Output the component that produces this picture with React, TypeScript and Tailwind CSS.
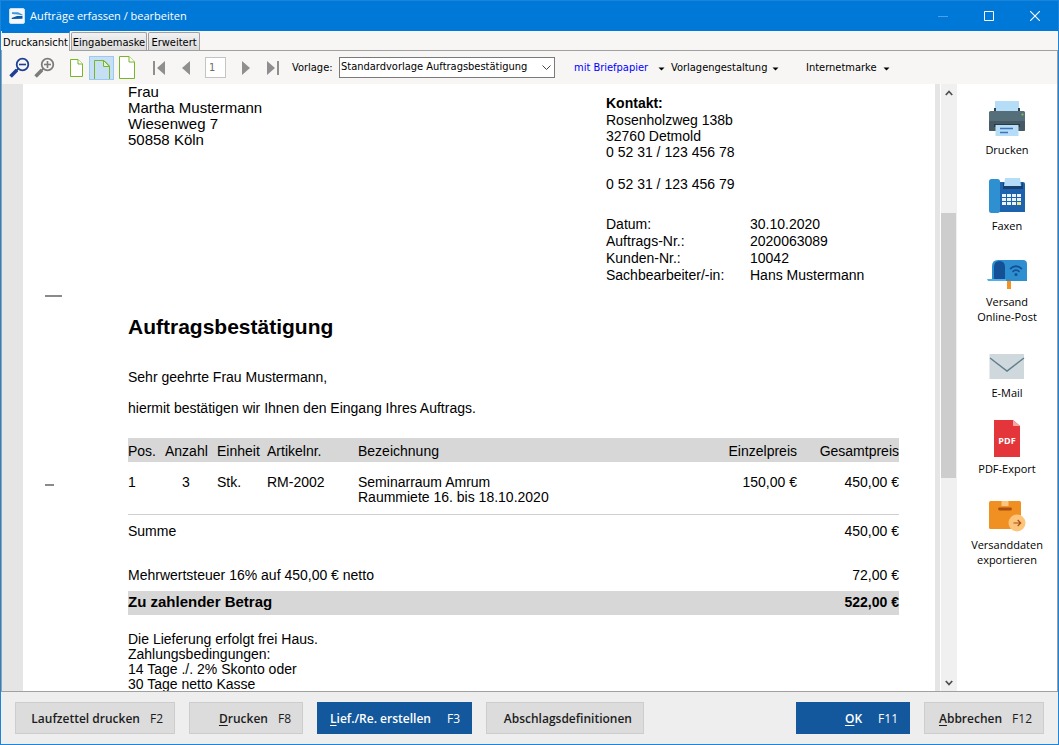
import { useState } from "react";
import type { ReactNode } from "react";
import clsx from "clsx";

type ActionButtonProps = {
    label: string;
    accessKeyLetter?: string;
    shortcut?: string;
    primary?: boolean;
    className?: string;
};

type SideActionProps = {
    lines: string[];
    children: ReactNode;
};

const TABS = [
    { id: "preview", label: "Druckansicht", width: "w-[68px]" },
    { id: "form", label: "Eingabemaske", width: "w-[76px]" },
    { id: "extended", label: "Erweitert", width: "w-[52px]" },
];

const META = [
    ["Datum:", "30.10.2020"],
    ["Auftrags-Nr.:", "2020063089"],
    ["Kunden-Nr.:", "10042"],
    ["Sachbearbeiter/-in:", "Hans Mustermann"],
];

function TitleBar() {
    return (
        <header className="flex h-[30px] shrink-0 items-center bg-[#0078d7] pl-2 text-white">
            <svg viewBox="0 0 16 16" className="h-4 w-4">
                <rect x="0.5" y="0.5" width="15" height="15" rx="1.5" fill="#f4f8fc" stroke="#c8dff4" />
                <path d="M3 4.2 L9 4.2 L13.5 6.4 L13.5 7.6 L9 6.4 L3 6 Z" fill="#3d97dc" />
                <path d="M2.5 10 L8 8 L13.5 8 L13.5 10.8 L3 11 Z" fill="#0a5aa8" />
            </svg>
            <h1 className="ml-[5px] text-[11px]">Aufträge erfassen / bearbeiten</h1>
            <div className="ml-auto flex h-full">
                <button type="button" aria-label="Minimieren" className="flex w-[46px] items-center justify-center">
                    <svg viewBox="0 0 10 10" className="h-[10px] w-[10px]"><path d="M0 5.5H10" stroke="#4da0e3" /></svg>
                </button>
                <button type="button" aria-label="Maximieren" className="flex w-[46px] items-center justify-center">
                    <svg viewBox="0 0 10 10" className="h-[10px] w-[10px]"><path d="M.5 .5H9.5V9.5H.5Z" fill="none" stroke="#fff" /></svg>
                </button>
                <button type="button" aria-label="Schließen" className="flex w-[46px] items-center justify-center">
                    <svg viewBox="0 0 10 10" className="h-[10px] w-[10px]"><path d="M0 0L10 10M10 0L0 10" stroke="#fff" strokeWidth="1.1" /></svg>
                </button>
            </div>
        </header>
    );
}

function Magnifier({ color, plus }: { color: string; plus?: boolean }) {
    return (
        <svg viewBox="0 0 22 22" className="h-[22px] w-[22px]" fill="none" stroke={color}>
            <circle cx="13.5" cy="7.5" r="5.8" strokeWidth="1.8" />
            <path d="M10 7.500H17" strokeWidth="1.6" />
            {plus && <path d="M13.500 4V11" strokeWidth="1.6" />}
            <path d="M9.300 11.700L7.500 13.500" strokeWidth="1.8" />
            <path d="M7.900 13.100L1.600 19.400" strokeWidth="3.600" />
        </svg>
    );
}

function MenuCaret() {
    return <svg viewBox="0 0 7 4" className="h-1 w-[7px]"><path d="M0.5 0.5H6.5L3.5 3.5Z" fill="#000" /></svg>;
}

function Toolbar() {
    const [page, setPage] = useState("1");
    const iconButton = "flex h-6 items-center justify-center";
    const menuButton = "flex shrink-0 items-center justify-between whitespace-nowrap pt-[2px]";

    return (
        <div className="flex h-[33px] shrink-0 items-center overflow-hidden bg-[#f7f6f4] pl-[6px] font-['DejaVu_Sans_Condensed','Noto_Sans',sans-serif] text-[11px] text-black">
            <button type="button" aria-label="Verkleinern" className={clsx(iconButton, "w-6")}><Magnifier color="#1f3f94" /></button>
            <button type="button" aria-label="Vergrößern" className={clsx(iconButton, "w-[26px]")}><Magnifier color="#7c7c7c" plus /></button>

            <button type="button" aria-label="Seite verkleinert" className={clsx(iconButton, "ml-[6px] w-[25px]")}>
                <svg viewBox="0 0 13 18" className="h-[18px] w-[13px]" fill="#fff" stroke="#76b72a">
                    <path d="M.5 .5H8L12.5 5V17.5H.5Z" /><path d="M8 .5V5H12.5" />
                </svg>
            </button>
            <button type="button" aria-label="Seitenbreite" className={clsx(iconButton, "w-[25px] items-end border border-[#99cbf0] bg-[#c6dff5]")}>
                <svg viewBox="0 0 16 19" className="h-[19px] w-4" fill="none" stroke="#76b72a">
                    <path d="M.5 19V.5H10L15.5 6V19" /><path d="M9.5 .5V6.5H15.5Z" fill="#e2f2d4" />
                </svg>
            </button>
            <button type="button" aria-label="Ganze Seite" className={clsx(iconButton, "w-[25px]")}>
                <svg viewBox="0 0 16 23" className="h-[23px] w-4" fill="#fff" stroke="#76b72a">
                    <path d="M.5 .5H10L15.5 6V22.5H.5Z" /><path d="M10 .5V6H15.5" />
                </svg>
            </button>

            <button type="button" aria-label="Erste Seite" className={clsx(iconButton, "ml-[6px] w-[27px]")}>
                <svg viewBox="0 0 12 16" className="h-4 w-3" fill="#8f8f8f"><path d="M0 1H2V15H0ZM12 1V15L4 8Z" /></svg>
            </button>
            <button type="button" aria-label="Vorherige Seite" className={clsx(iconButton, "w-[27px]")}>
                <svg viewBox="0 0 8 16" className="h-4 w-2" fill="#8f8f8f"><path d="M8 1V15L0 8Z" /></svg>
            </button>
            <input
                aria-label="Seite"
                value={page}
                onChange={e => setPage(e.target.value)}
                className="mx-[6px] h-[21px] w-[21px] border border-[#c4c4c4] bg-white pl-[3px] text-[11px] text-[#6d6d6d] outline-none"
            />
            <button type="button" aria-label="Nächste Seite" className={clsx(iconButton, "w-[27px]")}>
                <svg viewBox="0 0 8 16" className="h-4 w-2" fill="#8f8f8f"><path d="M0 1V15L8 8Z" /></svg>
            </button>
            <button type="button" aria-label="Letzte Seite" className={clsx(iconButton, "w-[27px]")}>
                <svg viewBox="0 0 12 16" className="h-4 w-3" fill="#8f8f8f"><path d="M10 1H12V15H10ZM0 1V15L8 8Z" /></svg>
            </button>

            <label htmlFor="template" className="ml-[6px] w-[47px] shrink-0 pt-[2px]">Vorlage:</label>
            <div className="relative w-[216px] shrink-0">
                <select id="template" className="block h-[21px] w-full appearance-none border border-[#7a7a7a] bg-white pl-px pr-5 text-[11px] outline-none">
                    <option>Standardvorlage Auftragsbestätigung</option>
                </select>
                <svg viewBox="0 0 9 6" className="pointer-events-none absolute right-1 top-2 h-[6px] w-[9px]">
                    <path d="M.5 .5L4.5 4.5L8.5 .5" fill="none" stroke="#444" />
                </svg>
            </div>

            <button type="button" className={clsx(menuButton, "ml-[19px] w-[91px] text-[#0000ff]")}>
                mit Briefpapier <MenuCaret />
            </button>
            <button type="button" className={clsx(menuButton, "ml-[6px] w-[108px]")}>
                Vorlagengestaltung <MenuCaret />
            </button>
            <button type="button" className={clsx(menuButton, "ml-[27px] w-[84px]")}>
                Internetmarke <MenuCaret />
            </button>
        </div>
    );
}

function Invoice() {
    return (
        <article className="flex min-w-0 flex-1 bg-white pr-9 font-['Liberation_Sans',Arial,sans-serif] text-[14px] leading-4 text-black">
            <div className="w-[105px] shrink-0 pl-[22px]" aria-hidden="true">
                <div className="mt-[211px] h-[2px] w-[17px] bg-[#8a8a8a]" />
                <div className="mt-[187px] h-[2px] w-[9px] bg-[#8a8a8a]" />
            </div>
            <div className="min-w-0 flex-1">
                <div className="flex justify-between">
                    <address className="text-[15px] not-italic">
                        Frau<br />
                        Martha Mustermann<br />
                        Wiesenweg 7<br />
                        50858 Köln
                    </address>
                    <div className="w-[293px] pt-[11px]">
                        <p className="font-bold">Kontakt:</p>
                        <p className="mt-px">Rosenholzweg 138b</p>
                        <p>32760 Detmold</p>
                        <p>0 52 31 / 123 456 78</p>
                        <p className="mt-4">0 52 31 / 123 456 79</p>
                        <dl className="mt-6 grid grid-cols-[144px_1fr] leading-[17px]">
                            {META.map(([term, value]) => (
                                <div key={term} className="contents">
                                    <dt>{term}</dt>
                                    <dd>{value}</dd>
                                </div>
                            ))}
                        </dl>
                    </div>
                </div>

                <h2 className="mt-[29px] text-[21px] font-bold leading-7">Auftragsbestätigung</h2>
                <p className="mt-7">Sehr geehrte Frau Mustermann,</p>
                <p className="mt-[15px]">hiermit bestätigen wir Ihnen den Eingang Ihres Auftrags.</p>

                <table className="mt-[22px] w-full table-fixed border-collapse text-left">
                    <colgroup>
                        <col className="w-[37px]" />
                        <col className="w-[52px]" />
                        <col className="w-[50px]" />
                        <col className="w-[91px]" />
                        <col />
                        <col className="w-[90px]" />
                        <col className="w-[102px]" />
                    </colgroup>
                    <thead>
                        <tr className="h-6 bg-[#d7d7d7] *:p-0 *:pt-[2px] *:font-normal">
                            <th>Pos.</th>
                            <th>Anzahl</th>
                            <th>Einheit</th>
                            <th>Artikelnr.</th>
                            <th>Bezeichnung</th>
                            <th className="text-right">Einzelpreis</th>
                            <th className="text-right">Gesamtpreis</th>
                        </tr>
                    </thead>
                    <tbody>
                        <tr className="border-b border-[#d0d0d0] align-top leading-[15px] *:pb-[9px] *:pt-[13px]">
                            <td>1</td>
                            <td><span className="block w-[42px] text-center">3</span></td>
                            <td>Stk.</td>
                            <td>RM-2002</td>
                            <td>Seminarraum Amrum<br />Raummiete 16. bis 18.10.2020</td>
                            <td className="text-right">150,00 €</td>
                            <td className="text-right">450,00 €</td>
                        </tr>
                    </tbody>
                    <tfoot>
                        <tr className="h-8">
                            <td colSpan={6}>Summe</td>
                            <td className="text-right">450,00 €</td>
                        </tr>
                        <tr className="*:pb-2 *:pt-5">
                            <td colSpan={6}>Mehrwertsteuer 16% auf 450,00 € netto</td>
                            <td className="text-right">72,00 €</td>
                        </tr>
                        <tr className="h-6 bg-[#d7d7d7] font-bold *:pb-[2px]">
                            <td colSpan={6} className="text-[15px]">Zu zahlender Betrag</td>
                            <td className="text-right">522,00 €</td>
                        </tr>
                    </tfoot>
                </table>

                <p className="mt-[17px] leading-[15px]">
                    Die Lieferung erfolgt frei Haus.<br />
                    Zahlungsbedingungen:<br />
                    14 Tage ./. 2% Skonto oder<br />
                    30 Tage netto Kasse
                </p>
            </div>
        </article>
    );
}

function ScrollRail() {
    return (
        <div className="flex w-4 shrink-0 flex-col bg-[#f0f0f0]">
            <button type="button" aria-label="Nach oben" className="flex h-[17px] items-center justify-center">
                <svg viewBox="0 0 8 6" className="h-[6px] w-2"><path d="M.8 5L4 1.5L7.2 5" fill="none" stroke="#505050" strokeWidth="1.8" /></svg>
            </button>
            <div className="flex-[112]" />
            <div className="mr-px flex-[265] bg-[#cdcdcd]" />
            <div className="flex-[196]" />
            <button type="button" aria-label="Nach unten" className="flex h-[17px] items-center justify-center">
                <svg viewBox="0 0 8 6" className="h-[6px] w-2"><path d="M.8 1L4 4.5L7.2 1" fill="none" stroke="#505050" strokeWidth="1.8" /></svg>
            </button>
        </div>
    );
}

function SideAction({ lines, children }: SideActionProps) {
    return (
        <button type="button" className="flex flex-col items-center text-[11px] leading-[15px] text-black">
            <svg viewBox="0 0 40 40" className="mb-px h-10 w-10">{children}</svg>
            {lines.map(line => <span key={line} className="whitespace-nowrap">{line}</span>)}
        </button>
    );
}

function SideBar() {
    return (
        <aside className="flex w-[100px] shrink-0 flex-col gap-5 overflow-hidden bg-white pt-[17px]">
            <SideAction lines={["Drucken"]}>
                <path d="M8 0H32V11H8Z" fill="#b5ddf7" />
                <path d="M7 7H9V11H31V7H33V12H7Z" fill="#2f4149" />
                <rect x="2" y="10" width="36" height="20" rx="1.5" fill="#546e7a" />
                <path d="M2 20H38V28.500Q38 30 36.500 30H3.500Q2 30 2 28.500Z" fill="#455a64" />
                <circle cx="35.500" cy="13.500" r="1.100" fill="#8bc34a" />
                <path d="M7 23H33V26H7Z" fill="#2b3a42" />
                <path d="M8.500 24H31.500V35H8.500Z" fill="#b5ddf7" />
                <path d="M13 27.500H26M13 31.500H21" stroke="#3f74bd" strokeWidth="1.600" />
            </SideAction>
            <SideAction lines={["Faxen"]}>
                <path d="M12 5H36Q38 5 38 7V35H12Z" fill="#1c62ad" />
                <rect x="2" y="2" width="11" height="34" rx="2.500" fill="#2e90d1" />
                <path d="M16 6H18V9H35V6H36V12H16Z" fill="#173f70" />
                <path d="M18 1H33L34 9H17Z" fill="#b5ddf7" />
                {[17, 21, 25].map(y =>
                    [15, 20, 25, 30].map(x => (
                        <rect key={`${x}-${y}`} x={x} y={y} width="4" height="3" fill={x === 30 && y === 25 ? "#f2e68b" : "#e8f3fb"} />
                    ))
                )}
            </SideAction>
            <SideAction lines={["Versand", "Online-Post"]}>
                <path d="M20 26H24V36H20Z" fill="#f59322" />
                <path d="M11 7H36Q40 7 40 11V28H5V13Q5 7 11 7Z" fill="#2e8fd0" />
                <path d="M7 27V14Q7 8 12.500 8Q18 8 18 14V27Z" fill="#154f96" />
                <path d="M0 26H19V28H1Z" fill="#55aee4" />
                <path d="M23 16Q29 10.500 35 16M25.500 18.800Q29 15.500 32.500 18.800" fill="none" stroke="#154f96" strokeWidth="1.700" />
                <circle cx="29" cy="21.500" r="1.500" fill="#154f96" />
            </SideAction>
            <SideAction lines={["E-Mail"]}>
                <path d="M2.500 10H37V35H2.500Z" fill="#cfd8dc" />
                <path d="M3 14L20 27L37 14" fill="none" stroke="#607d8b" strokeWidth="1.400" />
            </SideAction>
            <SideAction lines={["PDF-Export"]}>
                <path d="M7 0H26L33 6V37H7Z" fill="#e4353b" />
                <path d="M26 0L33 6H26Z" fill="#f5a5a5" />
                <text x="20" y="23.500" textAnchor="middle" fontSize="9" fontWeight="700" fill="#fff">PDF</text>
            </SideAction>
            <SideAction lines={["Versanddaten", "exportieren"]}>
                <rect x="2" y="5" width="32" height="28" rx="1.500" fill="#f09022" />
                <path d="M14.500 5H21.500V10H14.500Z" fill="#fdc57b" />
                <path d="M12.500 13H23.500" stroke="#a94f12" strokeWidth="2.800" strokeLinecap="round" />
                <circle cx="30" cy="27" r="8.500" fill="#fdc57b" />
                <path d="M26.500 27H33.500M30.700 24L33.700 27L30.700 30" fill="none" stroke="#a94f12" strokeWidth="1.200" />
            </SideAction>
        </aside>
    );
}

function ActionButton({ label, accessKeyLetter, shortcut, primary, className }: ActionButtonProps) {
    return (
        <button
            type="button"
            className={clsx(
                "flex h-8 shrink-0 items-center justify-end whitespace-nowrap border pr-[11px] pt-[2px] text-[12px]",
                primary ? "gap-4 border-[#13589c] bg-[#13589c] text-white" : "gap-[10px] border-[#cdcdcd] bg-[#dcdcdc] text-[#1c1c1c]",
                className
            )}
        >
            <span className="font-semibold">
                {accessKeyLetter && <u className="underline-offset-2">{accessKeyLetter}</u>}{label}
            </span>
            {shortcut && <span>{shortcut}</span>}
        </button>
    );
}

export default function App() {
    const [activeTab, setActiveTab] = useState("preview");

    return (
        <div className="flex h-screen flex-col overflow-hidden border border-[#1c84da] bg-[#eeeeee] font-['Open_Sans','Noto_Sans',sans-serif]">
            <TitleBar />

            <nav className="flex h-[19px] shrink-0 items-end gap-px bg-[#f7f6f4] pl-px font-['DejaVu_Sans_Condensed','Noto_Sans',sans-serif] text-[11px] text-black">
                {TABS.map(tab => (
                    <button
                        key={tab.id}
                        type="button"
                        onClick={() => setActiveTab(tab.id)}
                        className={clsx(
                            "flex items-center justify-center whitespace-nowrap border-r pt-[3px]",
                            tab.width,
                            activeTab === tab.id
                                ? "z-10 -mb-px h-5 border-t-2 border-r-[#a0a0a0] border-t-[#0078d7] bg-[#f7f6f4]"
                                : "h-[18px] rounded-t-xs border-l border-t border-[#a0a0a0] bg-linear-to-b from-[#f2f2f2] to-[#dcdcdc]"
                        )}
                    >
                        {tab.label}
                    </button>
                ))}
            </nav>

            <main className="flex min-h-0 flex-1 flex-col border border-[#a0a0a0]">
                <Toolbar />
                <div className="flex min-h-0 flex-1 bg-white">
                    <div className="flex min-w-0 flex-1 overflow-hidden border-l-[21px] border-r-[5px] border-[#e5e5e5]">
                        <Invoice />
                    </div>
                    <div className="w-px shrink-0" />
                    <ScrollRail />
                    <SideBar />
                </div>
            </main>

            <footer className="flex shrink-0 items-center gap-[14px] px-[14px] py-[10px]">
                <ActionButton label="Laufzettel drucken" shortcut="F2" className="w-40" />
                <ActionButton accessKeyLetter="D" label="rucken" shortcut="F8" className="w-[114px]" />
                <ActionButton accessKeyLetter="L" label="ief./Re. erstellen" shortcut="F3" primary className="w-[155px]" />
                <ActionButton label="Abschlagsdefinitionen" className="w-[158px]" />
                <ActionButton accessKeyLetter="O" label="K" shortcut="F11" primary className="ml-auto w-[114px]" />
                <ActionButton accessKeyLetter="A" label="bbrechen" shortcut="F12" className="w-[120px]" />
            </footer>
        </div>
    );
}
